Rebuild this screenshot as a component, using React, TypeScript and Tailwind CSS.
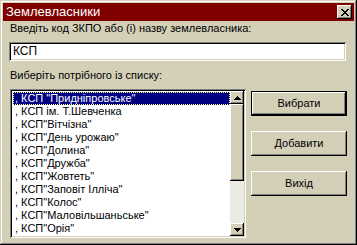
import React from "react";

const items = [
  ', КСП "Придніпровське"',
  ", КСП ім. Т.Шевченка",
  ', КСП"Вітчізна"',
  ', КСП"День урожаю"',
  ', КСП"Долина"',
  ', КСП"Дружба"',
  ', КСП"Жовтеть"',
  ', КСП"Заповіт Ілліча"',
  ', КСП"Колос"',
  ', КСП"Маловільшаньське"',
  ', КСП"Орія"',
];

const raised =
  "bg-[#d4d0b8] shadow-[inset_-1px_-1px_0_#000,inset_1px_1px_0_#fff,inset_-2px_-2px_0_#808080,inset_2px_2px_0_#d4d0b8]";

function Arrow({ up }: { up?: boolean }) {
  return (
    <svg width="7" height="4" viewBox="0 0 7 4" shapeRendering="crispEdges">
      {up ? (
        <path d="M3 0h1v1h1v1h1v1h1v1H0V3h1V2h1V1h1z" fill="#000" />
      ) : (
        <path d="M0 0h7v1H6v1H5v1H4v1H3V3H2V2H1V1H0z" fill="#000" />
      )}
    </svg>
  );
}

function Button({ label, isDefault }: { label: string; isDefault?: boolean }) {
  return (
    <div
      className={
        isDefault
          ? "w-[96px] h-[25px] border border-black"
          : "w-[96px] h-[25px]"
      }
    >
      <div
        className={`${raised} w-full h-full flex items-center justify-center text-[11px] leading-[13px] text-black`}
      >
        {label}
      </div>
    </div>
  );
}

export default function App() {
  return (
    <div
      className="w-[357px] h-[245px] bg-[#d4d0b8] shadow-[inset_-1px_-1px_0_#000,inset_1px_1px_0_#d4d0b8,inset_-2px_-2px_0_#808080,inset_2px_2px_0_#fff] flex flex-col p-[3px] overflow-hidden"
      style={{ fontFamily: '"Liberation Sans", Arial, sans-serif' }}
    >
      {/* title bar */}
      <div className="h-[18px] bg-[#800000] flex items-center justify-between pl-[3px]">
        <span className="text-white text-[13px] leading-[14px]">Землевласники</span>
        <div className={`${raised} w-[15px] h-[14px] mr-[2px] flex items-center justify-center`}>
          <svg width="8" height="7" viewBox="0 0 8 7" shapeRendering="crispEdges">
            <path
              d="M0 0h2v1h1v1h2V1h1V0h2v1H7v1H6v1H5v1h1v1h1v1h1v1H6V6H5V5H3v1H2v1H0V6h1V5h1V4h1V3H2V2H1V1H0z"
              fill="#000"
            />
          </svg>
        </div>
      </div>

      <div className="flex flex-col">
        <div className="mt-[1px] ml-[7px] text-[11px] leading-[13px] text-black">
          Введіть код ЗКПО або (і) назву землевласника:
        </div>

        <div className="mt-[7px] ml-[6px] w-[337px] h-[19px] bg-white shadow-[inset_1px_1px_0_#808080,inset_-1px_-1px_0_#fff,inset_2px_2px_0_#000,inset_-2px_-2px_0_#d4d0b8] pl-[4px] pt-[3px] text-[12px] leading-[13px] text-black">
          КСП
        </div>

        <div className="mt-[8px] ml-[7px] text-[11px] leading-[13px] text-black">
          Виберіть потрібного із списку:
        </div>

        <div className="mt-[7px] flex">
          {/* list box */}
          <div className="ml-[7px] w-[236px] h-[149px] bg-white shadow-[inset_1px_1px_0_#808080,inset_-1px_-1px_0_#fff,inset_2px_2px_0_#000,inset_-2px_-2px_0_#d4d0b8] p-[2px] flex">
            <div className="flex-1 pt-[1px] pl-[1px] overflow-hidden">
              {items.map((t, i) => (
                <div
                  key={i}
                  className={
                    i === 0
                      ? "h-[13px] bg-[#000080] text-white border border-dotted border-[#ffff80] pl-[1px] text-[11px] leading-[11px] whitespace-nowrap"
                      : "h-[13px] text-black pl-[2px] text-[11px] leading-[13px] whitespace-nowrap"
                  }
                >
                  {t}
                </div>
              ))}
            </div>
            {/* scrollbar */}
            <div className="w-[14px] flex flex-col bg-[#ebebe4]">
              <div className={`${raised} h-[13px] flex items-center justify-center`}>
                <Arrow up />
              </div>
              <div className={`${raised} h-[77px]`} />
              <div className="flex-1" />
              <div className={`${raised} h-[13px] flex items-center justify-center`}>
                <Arrow />
              </div>
            </div>
          </div>

          {/* buttons */}
          <div className="ml-[5px] pt-[2px] flex flex-col gap-[15px]">
            <Button label="Вибрати" isDefault />
            <Button label="Добавити" />
            <Button label="Вихід" />
          </div>
        </div>
      </div>
    </div>
  );
}
